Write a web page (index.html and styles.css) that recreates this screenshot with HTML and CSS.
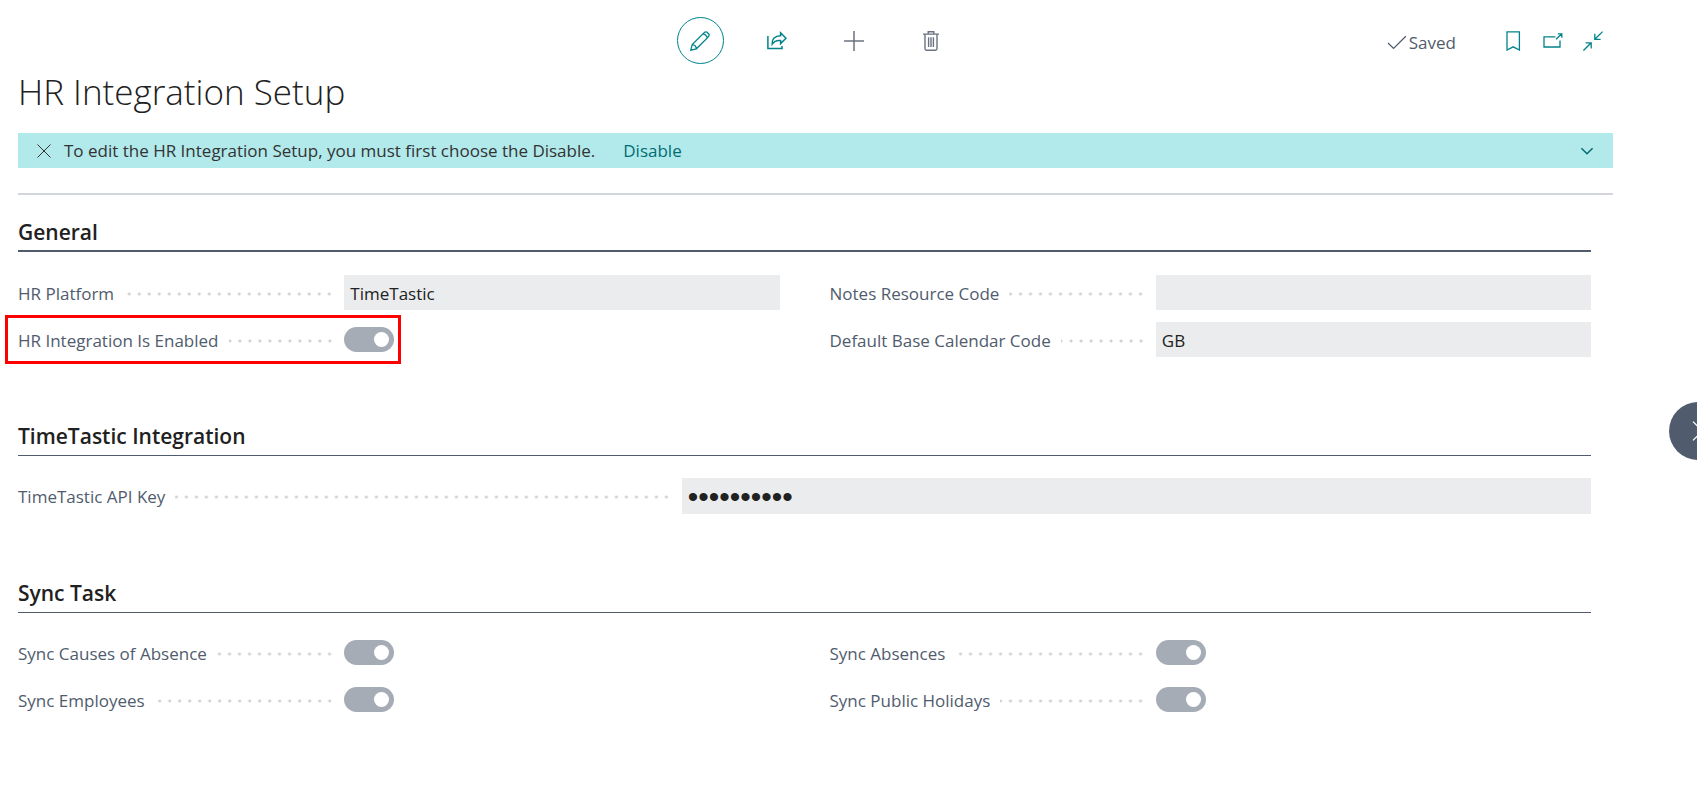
FILE: index.html
```html
<!DOCTYPE html>
<html lang="en">
<head>
<meta charset="utf-8">
<title>HR Integration Setup</title>
<link rel="stylesheet" href="styles.css">
</head>
<body>
<main class="page">
  <header class="topbar">
    <div class="toolbar">
      <button class="tool tool-active" type="button" aria-label="Edit">
        <svg width="20" height="20" viewBox="0 0 20 20"><path d="M.8 19.2 2.2 13.6 13.9 1.9Q15.2.5 16.8 1L19 3.2Q19.5 4.8 18.1 6.1L6.4 17.8ZM2.2 13.6Q5.8 13.8 6.4 17.8M13 2.8Q16.6 3.4 17.2 7"/></svg>
      </button>
      <button class="tool" type="button" aria-label="Share">
        <svg width="20" height="20" viewBox="0 0 20 20"><path d="M.9 5V17.6H15V15M13.6 1.8 19 7.2 13.6 12.6V9.6Q8.2 8.8 5.2 13.2Q4.8 5 13.6 4.8Z" stroke-width="1.5"/></svg>
      </button>
      <button class="tool tool-muted" type="button" aria-label="New">
        <svg width="20" height="20" viewBox="0 0 20 20"><path d="M10 0V20M0 10H20" stroke-width="1.5"/></svg>
      </button>
      <button class="tool tool-muted" type="button" aria-label="Delete">
        <svg width="20" height="20" viewBox="0 0 20 20"><path d="M2 3.1H18M7.2 3V.8H12.8V3M4 3.4V17.6Q4 19.2 5.6 19.2H14.4Q16 19.2 16 17.6V3.4M7.6 6.2V16M10 6.2V16M12.4 6.2V16" stroke-width="1.4"/></svg>
      </button>
    </div>
    <div class="page-actions">
      <span class="status">
        <svg width="20" height="20" viewBox="0 0 20 20"><path d="M1 10 6.6 15.4 18.8 3.2"/></svg>
        Saved
      </span>
      <button class="action" type="button" aria-label="Bookmark">
        <svg width="20" height="20" viewBox="0 0 20 20"><path d="M4 .8H16.4V19L10.2 15.8 4 19Z"/></svg>
      </button>
      <button class="action" type="button" aria-label="Open in new window">
        <svg width="20" height="20" viewBox="0 0 20 20"><path d="M12.4 5.8H1V16H17V9.4M13 8.2 18.8 2.8M14.8 2.8H18.8V6.8"/></svg>
      </button>
      <button class="action" type="button" aria-label="Collapse">
        <svg width="20" height="20" viewBox="0 0 20 20"><path d="M19.6.6 11.8 8.2M11.8 2.8V8.4H17.6M.4 19.6 8.2 11.8M2.6 11.8H8.2V17.4"/></svg>
      </button>
    </div>
  </header>

  <h1 class="title">HR Integration Setup</h1>

  <div class="notice">
    <button class="notice-close" type="button" aria-label="Dismiss">
      <svg width="14" height="14" viewBox="0 0 14 14"><path d="M.5.5 13.5 13.5M13.5.5.5 13.5"/></svg>
    </button>
    <span>To edit the HR Integration Setup, you must first choose the Disable.</span>
    <a class="notice-link" href="#">Disable</a>
    <button class="notice-more" type="button" aria-label="Show more">
      <svg width="14" height="14" viewBox="0 0 14 14"><path d="M1.4 4.2 7 9.8 12.6 4.2"/></svg>
    </button>
  </div>

  <form class="card">
    <section class="section">
      <h2 class="heading heading-strong">General</h2>
      <div class="fields">
        <div class="field">
          <div class="caption"><label for="platform">HR Platform</label></div>
          <input class="box" id="platform" type="text" value="TimeTastic" readonly>
        </div>
        <div class="field">
          <div class="caption"><label for="notes">Notes Resource Code</label></div>
          <input class="box" id="notes" type="text" value="" readonly>
        </div>
        <div class="field field-marked">
          <div class="caption"><label for="enabled">HR Integration Is Enabled</label></div>
          <input class="toggle" id="enabled" type="checkbox" role="switch" checked>
        </div>
        <div class="field">
          <div class="caption"><label for="calendar">Default Base Calendar Code</label></div>
          <input class="box" id="calendar" type="text" value="GB" readonly>
        </div>
      </div>
    </section>

    <section class="section">
      <h2 class="heading">TimeTastic Integration</h2>
      <div class="fields fields-single">
        <div class="field">
          <div class="caption"><label for="key">TimeTastic API Key</label></div>
          <input class="box box-secret" id="key" type="password" value="0000000000" readonly>
        </div>
      </div>
    </section>

    <section class="section">
      <h2 class="heading">Sync Task</h2>
      <div class="fields">
        <div class="field">
          <div class="caption"><label for="causes">Sync Causes of Absence</label></div>
          <input class="toggle" id="causes" type="checkbox" role="switch" checked>
        </div>
        <div class="field">
          <div class="caption"><label for="absences">Sync Absences</label></div>
          <input class="toggle" id="absences" type="checkbox" role="switch" checked>
        </div>
        <div class="field">
          <div class="caption"><label for="employees">Sync Employees</label></div>
          <input class="toggle" id="employees" type="checkbox" role="switch" checked>
        </div>
        <div class="field">
          <div class="caption"><label for="holidays">Sync Public Holidays</label></div>
          <input class="toggle" id="holidays" type="checkbox" role="switch" checked>
        </div>
      </div>
    </section>
  </form>
</main>
<button class="next" type="button" aria-label="Next">
  <svg width="12" height="20" viewBox="0 0 12 20"><path d="M1 .6 10.4 10 1 19.4"/></svg>
</button>
</body>
</html>
```
FILE: styles.css
```css
* { box-sizing: border-box; }

body {
  position: relative;
  min-height: 100vh;
  margin: 0;
  overflow-x: hidden;
  background: #fff;
  color: #212121;
  font: 17px/24px "Segoe UI", "Open Sans", "Noto Sans", sans-serif;
}

button {
  display: grid;
  place-items: center;
  padding: 0;
  border: 0;
  background: none;
  color: inherit;
  font: inherit;
}

svg {
  display: block;
  fill: none;
  stroke: currentColor;
  stroke-width: 1.3;
}

.page { padding: 17px 84px 40px 18px; }

.topbar {
  display: grid;
  grid-template-columns: 1fr auto 1fr;
  align-items: center;
}

.toolbar {
  display: flex;
  grid-column: 2;
  gap: 30px;
  color: #00838a;
}

.tool { width: 47px; height: 47px; }

.tool-active {
  border: 1px solid #00838a;
  border-radius: 50%;
}

.tool-muted { color: #6b7280; }

.page-actions {
  display: flex;
  justify-content: flex-end;
  align-items: center;
  gap: 20px;
  padding-right: 10px;
  color: #00838a;
}

.status {
  display: flex;
  align-items: center;
  gap: 2px;
  margin-right: 27px;
  padding-top: 4px;
  color: #505c6d;
}

.title {
  margin: 0 0 13px;
  font-size: 35px;
  font-weight: 300;
  line-height: 56px;
}

.notice {
  display: flex;
  align-items: center;
  min-height: 35px;
  padding: 0 19px;
  background: #b2e9eb;
  color: #333;
}

.notice-close { margin-right: 13px; }

.notice-link {
  margin-left: 28px;
  color: #006d73;
  text-decoration: none;
}

.notice-more {
  margin-left: auto;
  color: #006d73;
}

.notice svg { stroke-width: 1.5; }

.notice-close svg { stroke-width: 1; }

.card {
  margin-top: 25px;
  padding-right: 22px;
  border-top: 2px solid #d2d5da;
}

.section { padding-top: 22px; }

.section + .section { padding-top: 64px; }

.heading {
  margin: 0 0 22px;
  padding-bottom: 4px;
  border-bottom: 1px solid #505c6d;
  font-size: 21px;
  font-weight: 600;
  line-height: 30px;
}

.heading-strong {
  margin-bottom: 23px;
  padding-bottom: 3px;
  border-bottom-width: 2px;
}

.fields {
  display: grid;
  grid-template-columns: 1fr 1fr;
  gap: 12px 50px;
}

.fields-single { grid-template-columns: 1fr; }

.field {
  position: relative;
  display: grid;
  grid-template-columns: 3fr 4fr;
  align-items: center;
  min-height: 35px;
}

.fields-single .field { grid-template-columns: 73fr 100fr; }

.field-marked::before {
  content: "";
  position: absolute;
  inset: -7px auto -7px -13px;
  width: calc(300% / 7 + 64px);
  border: 3px solid #f00;
  pointer-events: none;
}

.caption {
  display: flex;
  align-items: center;
  gap: 10px;
  padding: 2px 10px 0 0;
  color: #505c6d;
}

.caption::after {
  content: "";
  flex: 1;
  height: 10px;
  background: radial-gradient(circle, #cfd1d4 1px, transparent 2px) right center / 10px 10px repeat-x;
}

.box {
  width: 100%;
  height: 35px;
  padding: 2px 6px 0;
  border: 0;
  border-radius: 0;
  outline: 0;
  background: #ebecee;
  color: #212121;
  font: inherit;
}

.box-secret {
  height: 36px;
  font-family: "Liberation Sans", sans-serif;
  font-size: 30px;
}

.toggle {
  display: flex;
  align-items: center;
  justify-content: flex-end;
  width: 50px;
  height: 25px;
  margin: 0;
  padding: 5px;
  border-radius: 13px;
  background: #a6acb6;
  appearance: none;
}

.toggle::before {
  content: "";
  width: 15px;
  height: 15px;
  border-radius: 50%;
  background: #fff;
}

.toggle:not(:checked) { justify-content: flex-start; }

.next {
  position: absolute;
  top: 402px;
  right: -30px;
  width: 58px;
  height: 58px;
  border-radius: 50%;
  background: #505c6d;
  color: #fff;
}
```
